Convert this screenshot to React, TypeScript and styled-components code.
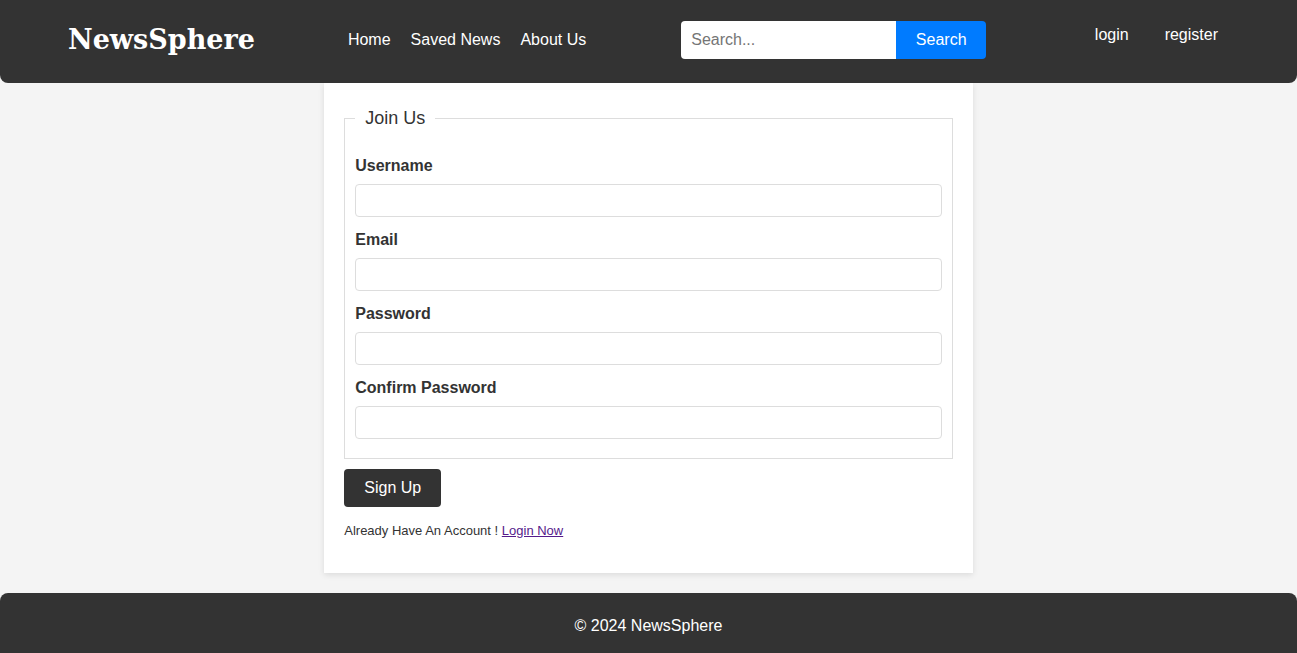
import React from 'react';
import styled, { createGlobalStyle } from 'styled-components';

const GlobalStyle = createGlobalStyle`
    * {
        box-sizing: border-box;
    }

    body {
        margin: 0;
        background: #f4f4f4;
        font-family: 'Liberation Sans', Arial, sans-serif;
        color: #333;
    }
`;

const Page = styled.div`
    display: flex;
    flex-direction: column;
    min-height: 100vh;
`;

const Header = styled.header`
    display: flex;
    align-items: center;
    height: 83px;
    padding: 0 79px 4px 68px;
    background: #333;
    border-radius: 0 0 8px 8px;
    position: relative;
    z-index: 1;
`;

const Logo = styled.h1`
    margin: 0;
    font-family: 'DejaVu Serif', 'Liberation Serif', serif;
    font-weight: bold;
    font-size: 27px;
    line-height: 32px;
    color: #fff;
`;

const Nav = styled.nav`
    display: flex;
    gap: 20px;
    margin-left: 93px;
`;

const NavLink = styled.a`
    color: #fff;
    font-size: 16px;
    text-decoration: none;
`;

const SearchForm = styled.form`
    display: flex;
    margin-left: 95px;
`;

const SearchInput = styled.input`
    width: 215px;
    height: 38px;
    padding: 0 10px;
    border: none;
    border-radius: 4px 0 0 4px;
    font-family: inherit;
    font-size: 16px;
    outline: none;

    &::placeholder {
        color: #757575;
    }
`;

const SearchButton = styled.button`
    width: 90px;
    height: 38px;
    border: none;
    border-radius: 0 4px 4px 0;
    background: #007bff;
    color: #fff;
    font-family: inherit;
    font-size: 16px;
`;

const Auth = styled.div`
    display: flex;
    gap: 36px;
    margin-left: auto;
    margin-bottom: 10px;
`;

const Main = styled.main`
    flex: 1;
`;

const Card = styled.div`
    width: 50%;
    margin: 0 auto;
    padding: 25px 20px 20px;
    background: #fff;
    box-shadow: 0 2px 6px rgba(0, 0, 0, 0.1);
`;

const Fieldset = styled.fieldset`
    margin: 0;
    padding: 28px 10px 19px;
    border: 1px solid #ddd;
`;

const Legend = styled.legend`
    padding: 0 10px;
    font-size: 18px;
    line-height: 21px;
    color: #333;
`;

const Group = styled.div`
    margin-bottom: 14px;

    &:last-child {
        margin-bottom: 0;
    }
`;

const Label = styled.label`
    display: block;
    margin-bottom: 9px;
    font-size: 16px;
    line-height: 18px;
    font-weight: bold;
    color: #333;
`;

const Input = styled.input`
    display: block;
    width: 100%;
    height: 33px;
    padding: 0 8px;
    border: 1px solid #ddd;
    border-radius: 4px;
    font-family: inherit;
    font-size: 16px;
`;

const SubmitButton = styled.button`
    margin-top: 10px;
    height: 38px;
    padding: 0 20px;
    border: none;
    border-radius: 4px;
    background: #333;
    color: #fff;
    font-family: inherit;
    font-size: 16px;
`;

const Note = styled.p`
    margin: 16px 0 15px;
    font-size: 13px;
    line-height: 15px;
    color: #333;
`;

const NoteLink = styled.a`
    color: #551a8b;
`;

const Footer = styled.footer`
    display: flex;
    align-items: center;
    justify-content: center;
    height: 60px;
    margin-top: 20px;
    padding-top: 6px;
    background: #333;
    border-radius: 8px 8px 0 0;
    color: #fff;
    font-size: 16px;
`;

const fields = ['Username', 'Email', 'Password', 'Confirm Password'];

const App = () => {
    return (
        <Page>
            <GlobalStyle />
            <Header>
                <Logo>NewsSphere</Logo>
                <Nav>
                    <NavLink href="#">Home</NavLink>
                    <NavLink href="#">Saved News</NavLink>
                    <NavLink href="#">About Us</NavLink>
                </Nav>
                <SearchForm onSubmit={(e) => e.preventDefault()}>
                    <SearchInput placeholder="Search..." />
                    <SearchButton type="submit">Search</SearchButton>
                </SearchForm>
                <Auth>
                    <NavLink href="#">login</NavLink>
                    <NavLink href="#">register</NavLink>
                </Auth>
            </Header>

            <Main>
                <Card>
                    <form onSubmit={(e) => e.preventDefault()}>
                        <Fieldset>
                            <Legend>Join Us</Legend>
                            {fields.map((name) => (
                                <Group key={name}>
                                    <Label>{name}</Label>
                                    <Input type={name.includes('Password') ? 'password' : 'text'} />
                                </Group>
                            ))}
                        </Fieldset>
                        <SubmitButton type="submit">Sign Up</SubmitButton>
                    </form>
                    <Note>
                        Already Have An Account ! <NoteLink href="#">Login Now</NoteLink>
                    </Note>
                </Card>
            </Main>

            <Footer>© 2024 NewsSphere</Footer>
        </Page>
    );
};

export default App;
